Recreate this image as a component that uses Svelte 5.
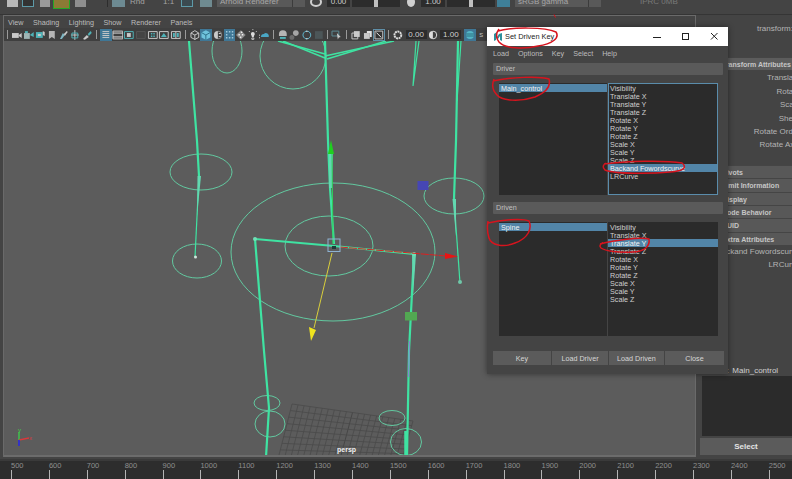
<script lang="ts">
  type Shape = { d: string; f?: string; s?: string };
  type Tool = { shapes: Shape[]; on?: boolean; boxed?: boolean };

  const G = '#c9c9c9';
  const T = '#4fb3b8';
  const D = '#8a8a8a';

  const t = (shapes: Shape[], on = false, boxed = false): Tool => ({ shapes, on, boxed });

  const groups: Tool[][] = [
    [
      t([{ d: 'M1 4h7v5H1z', f: G }, { d: 'M8 6l3-2v5L8 7z', f: G }]),
      t([{ d: 'M1 4h6v6H1z', f: '#9fb5b5' }, { d: 'M7 6l4-3v5z', f: T }, { d: 'M2 2h3v2H2z', f: T }]),
      t([{ d: 'M2 3h7v6H2z', f: T }, { d: 'M4 5h3v2H4z', f: G }, { d: 'M9 2l2 1v4l-2-1z', f: G }]),
      t([{ d: 'M3 2h6v8L6 8l-3 2z', f: '#b5b5b5' }]),
      t([{ d: 'M2 10l3-6 2 2-3 4z', f: '#7fb7c4' }, { d: 'M6 5l3-3 1 1-3 4z', f: G }]),
      t([{ d: 'M6 1v10M2 6h8', s: G }, { d: 'M3 4h6v5H3z', s: T }]),
      t([{ d: 'M2 10l4-4 2 2-4 3z', f: G }, { d: 'M7 5l3-3 1 2-3 3z', f: T }])
    ],
    [
      t([{ d: 'M2.500 2.500h7M2.500 4.500h7M2.500 6.500h7M2.500 8.500h7', s: G }], true),
      t([{ d: 'M1 2h10v8H1z', s: G }, { d: 'M1 4h10M1 8h10', s: '#e0e0e0' }]),
      t([{ d: 'M1.500 2.500h9v7h-9z', s: T }, { d: 'M4 4h4v4H4z', f: G }]),
      t([{ d: 'M1.500 2.500h9v7h-9z', s: '#565656', f: '#444' }]),
      t([{ d: 'M1.500 2.500h9v7h-9z', s: G }, { d: 'M4 4h1.500v1.500H4zM6.500 4H8v1.500H6.500zM4 6.500h1.500V8H4zM6.500 6.500H8V8H6.500z', f: T }]),
      t([{ d: 'M1.500 2.500h9v7h-9z', s: G }, { d: 'M3 8l3-4 3 4z', f: T }]),
      t([{ d: 'M1.500 2.500h9v7h-9z', s: G }, { d: 'M6 2.500v7', s: G }, { d: 'M3 4h2v4H3zM7 4h2v4H7z', f: T }])
    ],
    [
      t([{ d: 'M6 1.500l4 2.500v4.500l-4 2-4-2V4z', s: G }, { d: 'M2 4l4 2 4-2M6 6v5', s: G }]),
      t([{ d: 'M6 1l4.500 2.500v5L6 11 1.500 8.500v-5z', f: '#6fc3dc' }, { d: 'M1.500 3.500L6 6l4.500-2.500M6 6v5', s: '#2d6f88' }], true),
      t([{ d: 'M6 2a4 4 0 0 0 0 8z', f: G }, { d: 'M6 2a4 4 0 0 1 0 8', s: D }, { d: 'M7 4h2v1H7zM7 7h2v1H7z', f: G }]),
      t([{ d: 'M2 2h1.500v1.500H2zM5 2h1.500v1.500H5zM8 2h1.500v1.500H8zM2 5h1.500v1.500H2zM8 5h1.500v1.500H8zM2 8h1.500v1.500H2zM5 8h1.500v1.500H5zM8 8h1.500v1.500H8z', f: '#9fc7da' }], true),
      t([{ d: 'M6 1l5 5-5 5-5-5z', f: D }, { d: 'M6 2.500v1.500h1.500V2.500zM3.500 5v1.500H5V5zM7 5v1.500h1.500V5zM5 7.500V9h1.500V7.500z', f: '#eee' }]),
      t([{ d: 'M4 5a2 2 0 1 1 4 0c0 1-1 1.500-1 3H5c0-1.500-1-2-1-3z', f: '#ddd' }, { d: 'M5 9h2v1.500H5zM6 0v1M2 2l1 1M10 2L9 3', s: G }]),
      t([{ d: 'M2 8a3 3 0 0 1 3-3 3 3 0 0 1 5 3z', f: '#4aa6c4' }, { d: 'M1 6a1 1 0 0 0 0 3', s: G }])
    ],
    [
      t([{ d: 'M2 5a4 4 0 0 1 8 0v2H2z', f: '#b5b5b5' }, { d: 'M3 8h6v2H3z', f: T }]),
      t([{ d: 'M7 1a3 3 0 1 0 .01 0z', f: '#a5a5a5' }, { d: 'M3 6a2.500 2.500 0 1 0 .01 0z', f: '#6b6b6b' }]),
      t([{ d: 'M6 2a4 4 0 1 0 .01 0', s: '#5fb7cf' }, { d: 'M6 1l1 2H5zM6 11l1-2H5z', f: G }]),
      t([{ d: 'M2 2h8v8H2z', f: '#4c5658' }])
    ],
    [t([{ d: 'M1 2h7v5H1z', s: '#5d8a94' }, { d: 'M6 4l4 4-2 .500-1 2z', f: G }])],
    [
      t([{ d: 'M2 4h6v6H2z', s: G }, { d: 'M4 2h6v6H4z', f: G }]),
      t([{ d: 'M2 4h6v6H2z', f: G }, { d: 'M5 2h5v6H8V4H5z', f: '#e0e0e0' }]),
      t([{ d: 'M2 2h8v8H2z', s: G }, { d: 'M3.500 3.500l5 5', s: '#eee' }], false, true)
    ]
  ];

  const ticks = Array.from({ length: 21 }, (_, i) => 500 + i * 100);

  const driverAttrs = ['Visibility', 'Translate X', 'Translate Y', 'Translate Z', 'Rotate X', 'Rotate Y', 'Rotate Z', 'Scale X', 'Scale Y', 'Scale Z', 'Backand Fowordscurve', 'LRCurve'];
  const drivenAttrs = driverAttrs.slice(0, 10);

  const bars = ['Pivots', 'Limit Information', 'Display', 'Node Behavior', 'UUID', 'Extra Attributes'];
  const transformRows = ['Translate', 'Rotate', 'Scale', 'Shear', 'Rotate Order', 'Rotate Axis'];

  // floor grid, four corners in page coordinates
  const TL = [291, 403], TR = [412, 420], BR = [400, 462], BL = [276, 462];
  const mix = (a: number[], b: number[], k: number) => [a[0] + (b[0] - a[0]) * k, a[1] + (b[1] - a[1]) * k];
  const gridLines: { a: number[]; b: number[]; mid: boolean }[] = [];
  for (let i = 0; i <= 20; i++) {
    gridLines.push({ a: mix(TL, TR, i / 20), b: mix(BL, BR, i / 20), mid: i === 10 });
  }
  for (let i = 0; i <= 9; i++) {
    gridLines.push({ a: mix(TL, BL, i / 9), b: mix(TR, BR, i / 9), mid: false });
  }

  const thick = [
    'M188 40L196 140L198 175',
    'M324 40L327 140L329 187L333 243',
    'M254 238L333 245L413 253',
    'M254 238L263 350L268 407L265 456',
    'M413 253L408 350L406 456',
    'M457 40L455 140L453 198'
  ];
  const thin = [
    'M198 175L194 256',
    'M453 198L459 282',
    'M415 40L412 85L418 40',
    'M460 40L456 100'
  ];
  const doubled = [
    'M277 40L324 53',
    'M282 40L324 57',
    'M324 55L393 40',
    'M326 58L385 40'
  ];
  // the fatter, paler part near each upper joint
  const tapers = [
    'M196.500 175h3.500L196 215z',
    'M328 150h4L331 187h-3z',
    'M451.500 198h3.500L455 235z',
    'M411 253h4L412 295z'
  ];

  const rings = [
    [332, 251, 102, 69],
    [328, 245, 44, 30],
    [200, 171, 31, 18],
    [196, 260, 24.500, 17],
    [453, 195, 30, 18],
    [226, 50, 15, 22],
    [292, 55, 33, 33],
    [266, 402, 13, 7.500],
    [269, 423, 15, 13],
    [391, 417, 13, 7.500],
    [405, 441, 15.500, 13.500]
  ];

  const scribbles = [
    'M498 31C512 27 545 27 556 32C560 38 552 44 538 46C525 49 505 49 499 42C496 38 496 33 499 29',
    'M493 81C510 77 540 76 549 79C551 86 547 92 535 97C520 102 502 101 497 95C492 90 492 84 494 79',
    'M604 164C625 161 665 160 682 163C687 167 685 171 670 172C650 174 615 174 605 170C602 167 603 165 606 163',
    'M488 223C500 220 522 218 529 221C532 228 529 238 515 243C503 248 491 245 489 238C487 232 487 227 488 221',
    'M600 244C615 240 640 237 649 239C650 245 646 252 632 252C620 253 605 251 601 248C599 246 600 244 603 243'
  ];
</script>

<div class="app">
  <div class="strip">
    <span class="sq s-new"></span>
    <span class="sq s-open"></span>
    <span class="sq s-save"></span>
    <span class="sq s-active"></span>
    <span class="sq s-undo"></span>
    <i class="sep"></i>
    <span class="sq s-render"></span>
    <span class="lbl rnd">Rnd</span>
    <span class="lbl one">1:1</span>
    <span class="sq s-frame"></span>
    <span class="sq s-snap"></span>
    <span class="combo">Arnold Renderer<b></b></span>
    <span class="sq ring"></span>
    <span class="num">0.00</span>
    <span class="slider"><u></u></span>
    <span class="sq half"></span>
    <span class="num n2">1.00</span>
    <span class="slider s2"><u></u></span>
    <span class="sq cyan"></span>
    <span class="combo gamma">sRGB gamma<b></b></span>
    <span class="lbl ipr">IPRC 0MB</span>
  </div>

  <div class="main">
    <div class="panel">
      <nav class="menubar">
        <span>View</span><span>Shading</span><span>Lighting</span><span>Show</span><span>Renderer</span><span>Panels</span>
      </nav>
      <div class="toolbar">
        {#each groups as group}
          <i class="tsep"></i>
          {#each group as tool}
            <span class="tool" class:on={tool.on} class:boxed={tool.boxed}>
              <svg width="12" height="12" viewBox="0 0 12 12">
                {#each tool.shapes as p}
                  <path d={p.d} fill={p.f ?? 'none'} stroke={p.s ?? 'none'} />
                {/each}
              </svg>
            </span>
          {/each}
        {/each}
        <i class="tsep"></i>
        <span class="tool">
          <svg width="12" height="12" viewBox="0 0 12 12"><circle cx="6" cy="6" r="3.500" fill="none" stroke="#ddd" stroke-width="2" stroke-dasharray="2 .6" /></svg>
        </span>
        <span class="tnum">0.00</span>
        <span class="tool">
          <svg width="12" height="12" viewBox="0 0 12 12"><path d="M6 2a4 4 0 1 0 0 8z" fill="#ddd" /><path d="M6 2a4 4 0 0 1 0 8" fill="none" stroke="#ddd" /></svg>
        </span>
        <span class="tnum">1.00</span>
        <span class="tool on cyan-tool">
          <svg width="12" height="12" viewBox="0 0 12 12"><circle cx="6" cy="6" r="4" fill="#54b6c6" /><path d="M2 5h8M2 7h8" stroke="#2b6f80" /></svg>
        </span>
        <span class="tail">s</span>
      </div>

      <div class="viewport">
        <svg class="scene" viewBox="3 40 692 416" width="692" height="416">
          {#each gridLines as l}
            <line x1={l.a[0]} y1={l.a[1]} x2={l.b[0]} y2={l.b[1]} stroke={l.mid ? '#404040' : '#4a4a4a'} stroke-width=".8" />
          {/each}
          {#each rings as r}
            <ellipse cx={r[0]} cy={r[1]} rx={r[2]} ry={r[3]} fill="none" stroke="#62c9a0" stroke-width="1" />
          {/each}
          {#each thick as d}
            <path {d} fill="none" stroke="#3fe3a2" stroke-width="2.200" />
          {/each}
          {#each thin as d}
            <path {d} fill="none" stroke="#3fe3a2" stroke-width="1.200" />
          {/each}
          {#each doubled as d}
            <path {d} fill="none" stroke="#3fe3a2" stroke-width="1.500" />
          {/each}
          {#each tapers as d}
            <path {d} fill="#62d8b0" />
          {/each}
          <path d="M405 430L405 456" stroke="#3fe3a2" stroke-width="3.500" />
          <path d="M408.500 340L407.500 376" stroke="#8d7fd6" stroke-width="1" />
          <circle cx="254" cy="238" r="2" fill="#6fe0b6" />
          <circle cx="413" cy="253" r="2" fill="#6fe0b6" />
          <circle cx="459" cy="281" r="2" fill="#6fc7a8" />
          <circle cx="194.500" cy="256" r="1.500" fill="#d0e6dc" />

          <path d="M331 153L332 243" stroke="#2fd05c" stroke-width="1" />
          <path d="M330 139L333 153H327z" fill="#1fd01f" />
          <path d="M339 246L445 255" stroke="#dd1f1f" stroke-width="1" stroke-dasharray="8 1" />
          <path d="M444 252L457 255.500L444 258z" fill="#e81414" />
          <path d="M331 252L313 327" stroke="#d9cf3c" stroke-width="1" />
          <path d="M308 326L315 329L310 340z" fill="#f0e41e" />
          <rect x="327" y="238" width="12" height="12.500" fill="none" stroke="#8db2d2" />
          <rect x="331" y="245" width="4" height="3" fill="#1e3c3a" />
          <rect x="416.500" y="180" width="11" height="9" fill="#4646b4" />
          <rect x="404" y="311" width="12" height="8.500" fill="#52a852" />

          <path d="M18 439V431" stroke="#3ccf4a" stroke-width="1.300" />
          <path d="M18 439L28 437" stroke="#d8383c" stroke-width="1.300" />
          <path d="M18 439V445" stroke="#2a2ae0" stroke-width="1.600" />
          <text x="17" y="431" class="gizmo y">y</text>
          <text x="28" y="439" class="gizmo x">x</text>
          <text x="336" y="450.500" class="persp">persp</text>
        </svg>
      </div>
    </div>

    <aside class="side">
      <div class="side-inner">
        <div class="row first">transform:</div>
        <div class="bar lead">Transform Attributes</div>
        <div class="rows">
          {#each transformRows as row}
            <div class="row">{row}</div>
          {/each}
        </div>
        <div class="bars">
          {#each bars as b}
            <div class="bar">{b}</div>
          {/each}
        </div>
        <div class="row">Backand Fowordscurve</div>
        <div class="row">LRCurve</div>
      </div>
      <div class="side-bottom">
        <div class="notes">Notes: <span>Main_control</span></div>
        <div class="notes-box"></div>
        <button class="select">Select</button>
      </div>
    </aside>
  </div>

  <div class="timeline">
    {#each ticks as n}
      <div class="tick"><span>{n}</span><i></i></div>
    {/each}
  </div>

  <section class="dialog">
    <header class="titlebar">
      <svg class="logo" width="10" height="11" viewBox="0 0 10 11"><path d="M1 10V3l3-2v5l2-3 3-1v8L7 9V5L5 8 3 7v2z" fill="#2c8f9c" /></svg>
      <span class="title">Set Driven Key</span>
      <svg class="winbtn" width="65" height="12" viewBox="0 0 65 12">
        <path d="M0 6.500h8" stroke="#222" />
        <rect x="29.500" y="2.500" width="6" height="6" fill="none" stroke="#222" />
        <path d="M58 2l6.500 6.500M64.500 2L58 8.500" stroke="#222" />
      </svg>
    </header>
    <nav class="dmenu"><span>Load</span><span>Options</span><span>Key</span><span>Select</span><span>Help</span></nav>

    <div class="dhead">Driver</div>
    <div class="lists driver">
      <div class="list"><div class="item sel">Main_control</div></div>
      <div class="list focus">
        {#each driverAttrs as a, i}
          <div class="item" class:sel={i === 10}>{a}</div>
        {/each}
      </div>
    </div>

    <div class="dhead">Driven</div>
    <div class="lists driven">
      <div class="list"><div class="item sel">Spine</div></div>
      <div class="list">
        {#each drivenAttrs as a, i}
          <div class="item" class:sel={i === 2}>{a}</div>
        {/each}
      </div>
    </div>

    <div class="actions">
      <button>Key</button><button>Load Driver</button><button>Load Driven</button><button>Close</button>
    </div>
  </section>

  <svg class="marks" viewBox="0 0 792 479" width="792" height="479">
    {#each scribbles as d}
      <path {d} fill="none" stroke="#d6141e" stroke-width="1.500" />
    {/each}
    <path d="M554 14.500l1.500 3" stroke="#d6141e" stroke-width="1" />
  </svg>
</div>

<style>
  :global(body) {
    margin: 0;
    background: #444;
  }

  .app {
    position: relative;
    width: 792px;
    height: 479px;
    overflow: hidden;
    display: grid;
    grid-template-rows: 15px 444px 20px;
    background: #444;
    color: #c8c8c8;
    font-family: "Liberation Sans", Arial, sans-serif;
    font-size: 8px;
  }

  /* top shelf, cut off by the screenshot */
  .strip {
    display: flex;
    align-items: flex-end;
    overflow: hidden;
    padding: 0 0 7px 7px;
    height: 15px;
    box-sizing: border-box;
    border-bottom: 1px solid #353535;
    background: #444;
  }
  .sq {
    flex: none;
    width: 11px;
    height: 10px;
    box-sizing: border-box;
  }
  .s-new { background: #b9b9b9; margin-right: 4px; }
  .s-open { width: 12px; border: 1px solid #5d9aa8; background: #333; margin-right: 6px; }
  .s-save { width: 10px; background: #9a9a9a; margin-right: 3px; }
  .s-active { width: 17px; height: 12px; margin: 0 5px -2px 0; border: 1px solid #25a825; background: #8c7a35; }
  .s-undo { background: #8f8f8f; }
  .sep { flex: none; width: 1px; height: 12px; margin: 0 4px 0 21px; background: #2d2d2d; }
  .s-render { width: 13px; background: #6d8a92; margin-right: 5px; }
  .lbl { color: #a5a5a5; line-height: 10px; flex: none; }
  .rnd { width: 33px; }
  .one { width: 18px; }
  .s-frame { width: 12px; border: 1px solid #5d9aa8; background: #3b4a50; margin-right: 7px; }
  .s-snap { width: 12px; background: #6f8a90; margin-right: 5px; }
  .combo {
    flex: none;
    position: relative;
    width: 88px;
    height: 13px;
    padding-left: 3px;
    box-sizing: border-box;
    line-height: 16px;
    background: #595959;
    color: #a8a8a8;
  }
  .combo b {
    position: absolute;
    right: 12px;
    top: 0;
    bottom: 0;
    width: 1px;
    background: #3c3c3c;
  }
  .combo.gamma {
    width: 86px;
    margin-left: 5px;
    margin-right: 39px;
  }
  .ring {
    width: 12px;
    border: 2px solid #cfcfcf;
    border-radius: 50%;
    margin: 0 5px;
  }
  .half {
    background: #d0d0d0;
    border-radius: 50%;
    width: 8px;
    margin: 0 6px 0 7px;
  }
  .num {
    flex: none;
    width: 23px;
    height: 12px;
    background: #2c2c2c;
    color: #ccc;
    line-height: 14px;
    text-align: center;
  }
  .n2 { width: 24px; }
  .slider {
    flex: none;
    position: relative;
    width: 48px;
    height: 11px;
    margin-left: 2px;
    background: #2c2c2c;
  }
  .slider u {
    position: absolute;
    left: 22px;
    top: 0;
    width: 4px;
    height: 11px;
    background: #c0c0c0;
  }
  .s2 { margin-right: 2px; }
  .cyan {
    width: 13px;
    height: 13px;
    background: #3f7f98;
  }
  .ipr { color: #7a7a7a; }

  .main {
    display: flex;
    min-height: 0;
  }

  .panel {
    flex: none;
    width: 693px;
    margin-left: 3px;
    display: flex;
    flex-direction: column;
    box-sizing: border-box;
    border-top: 1px solid #6a6a6a;
    border-right: 1px solid #6a6a6a;
    border-left: 1px solid #6a6a6a;
    height: 442px;
  }

  .menubar {
    display: flex;
    gap: 9.500px;
    height: 12px;
    padding-left: 4px;
    align-items: center;
    background: #444;
    color: #bdbdbd;
    font-size: 7.200px;
    flex: none;
  }

  .toolbar {
    display: flex;
    align-items: center;
    height: 13px;
    flex: none;
    background: #3f3f3f;
    overflow: hidden;
  }
  .tsep {
    flex: none;
    width: 1px;
    height: 9px;
    margin: 0 3px;
    background: #9a9a9a;
  }
  .tool {
    flex: none;
    width: 11.700px;
    height: 12px;
    display: flex;
    align-items: center;
    justify-content: center;
    box-sizing: border-box;
  }
  .tool.on { background: #3f7796; }
  .tool.boxed { outline: 1px solid #5f8fa8; outline-offset: -1px; background: #333; }
  .cyan-tool { margin-left: 3px; width: 12px; }
  .tnum {
    flex: none;
    width: 21px;
    height: 9px;
    line-height: 9px;
    margin-left: 2px;
    text-align: center;
    background: #2c2c2c;
    color: #d0d0d0;
  }
  .tail { margin-left: 3px; color: #bbb; }

  .viewport {
    flex: 1;
    min-height: 0;
    background: #5c5c5c;
    border-bottom: 2px solid #6c6c6c;
    overflow: hidden;
  }
  .scene { display: block; }
  .gizmo { font: 6px "Liberation Sans", sans-serif; }
  .gizmo.y { fill: #3ccf4a; }
  .gizmo.x { fill: #d8383c; }
  .persp {
    font: bold 7px "Liberation Sans", sans-serif;
    fill: #f0f0f0;
  }

  .side {
    flex: none;
    width: 96px;
    display: flex;
    flex-direction: column;
    justify-content: space-between;
    box-sizing: border-box;
    overflow: hidden;
  }
  .side-inner {
    width: 101px;
    margin-left: 3px;
    padding-top: 9px;
    box-sizing: border-box;
    text-align: right;
  }
  .row {
    height: 13.400px;
    line-height: 13px;
    color: #b4b4b4;
    white-space: nowrap;
  }
  .row.first { height: 33px; line-height: 9px; margin-right: 7px; }
  .rows { margin-top: 1px; }
  .bar {
    height: 13.400px;
    line-height: 13px;
    padding-left: 23px;
    text-align: left;
    background: #585858;
    color: #c6c6c6;
    font-size: 7px;
    font-weight: bold;
    white-space: nowrap;
    overflow: hidden;
    border-top: 1px solid #454545;
    box-sizing: border-box;
  }
  .bar.lead { background: #5c5c5c; }
  .bars { margin-top: 13px; }

  .side-bottom {
    padding: 0 0 4px 4px;
    box-sizing: border-box;
  }
  .notes {
    padding-left: 6px;
    color: #999;
    line-height: 9px;
  }
  .notes span { color: #cfcfcf; margin-left: 1px; }
  .notes-box {
    height: 60px;
    margin: 1px 0 2px 2px;
    background: #2b2b2b;
  }
  .select {
    display: block;
    width: 100%;
    height: 17px;
    border: 0;
    padding: 0;
    background: #5b5b5b;
    color: #e4e4e4;
    font: bold 8px "Liberation Sans", sans-serif;
  }

  .timeline {
    display: flex;
    padding-left: 11px;
    background: #2d2d2d;
    border-top: 2px solid #3a3a3a;
    box-sizing: border-box;
  }
  .tick {
    flex: none;
    width: 37.900px;
    display: flex;
    flex-direction: column;
    justify-content: flex-end;
    height: 18px;
  }
  .tick span {
    line-height: 9px;
    font-size: 7.500px;
    color: #8f8f8f;
  }
  .tick i {
    display: block;
    width: 1px;
    height: 9px;
    background: #b5b5b5;
  }

  /* floating tool window */
  .dialog {
    position: absolute;
    left: 487px;
    top: 27px;
    width: 241px;
    height: 347px;
    box-sizing: border-box;
    background: #444;
    box-shadow: 0 0 6px rgba(0, 0, 0, 0.45);
  }
  .titlebar {
    display: flex;
    align-items: center;
    height: 19px;
    padding-left: 6px;
    background: #fff;
    color: #222;
  }
  .logo { flex: none; }
  .title {
    margin-left: 2px;
    font-size: 7.400px;
    flex: 1;
  }
  .winbtn { flex: none; margin-right: 10px; }

  .dmenu {
    display: flex;
    gap: 9px;
    height: 15px;
    align-items: center;
    padding-left: 6px;
    color: #bdbdbd;
    font-size: 7.200px;
  }

  .dhead {
    height: 12px;
    line-height: 12px;
    margin: 2px 5px 0 6px;
    padding-left: 3px;
    background: #5a5a5a;
    color: #c0c0c0;
    font-size: 7.200px;
    border-radius: 1px;
  }

  .lists {
    display: grid;
    grid-template-columns: 108px 110px;
    gap: 1px;
    margin: 8px 0 0 12px;
  }
  .driver { height: 112px; margin-bottom: 7px; }
  .driven { height: 114px; }

  .list {
    background: #2b2b2b;
    box-sizing: border-box;
    overflow: hidden;
    padding-top: 1px;
  }
  .list.focus { outline: 1px solid #5a8cab; outline-offset: -1px; }
  .item {
    height: 8px;
    line-height: 9px;
    padding-left: 2px;
    font-size: 7.200px;
    color: #cfcfcf;
    white-space: nowrap;
  }
  .item.sel {
    background: #5285a8;
    color: #f4f4f4;
  }

  .actions {
    display: grid;
    grid-template-columns: 58px 56px 55px 59px;
    gap: 1px;
    margin: 15px 5px 0 6px;
  }
  .actions button {
    height: 14px;
    border: 0;
    padding: 0;
    background: #5b5b5b;
    color: #d6d6d6;
    font: 7.200px "Liberation Sans", sans-serif;
  }

  /* red hand-drawn circles on top of the screenshot */
  .marks {
    position: absolute;
    left: 0;
    top: 0;
    pointer-events: none;
  }
</style>
